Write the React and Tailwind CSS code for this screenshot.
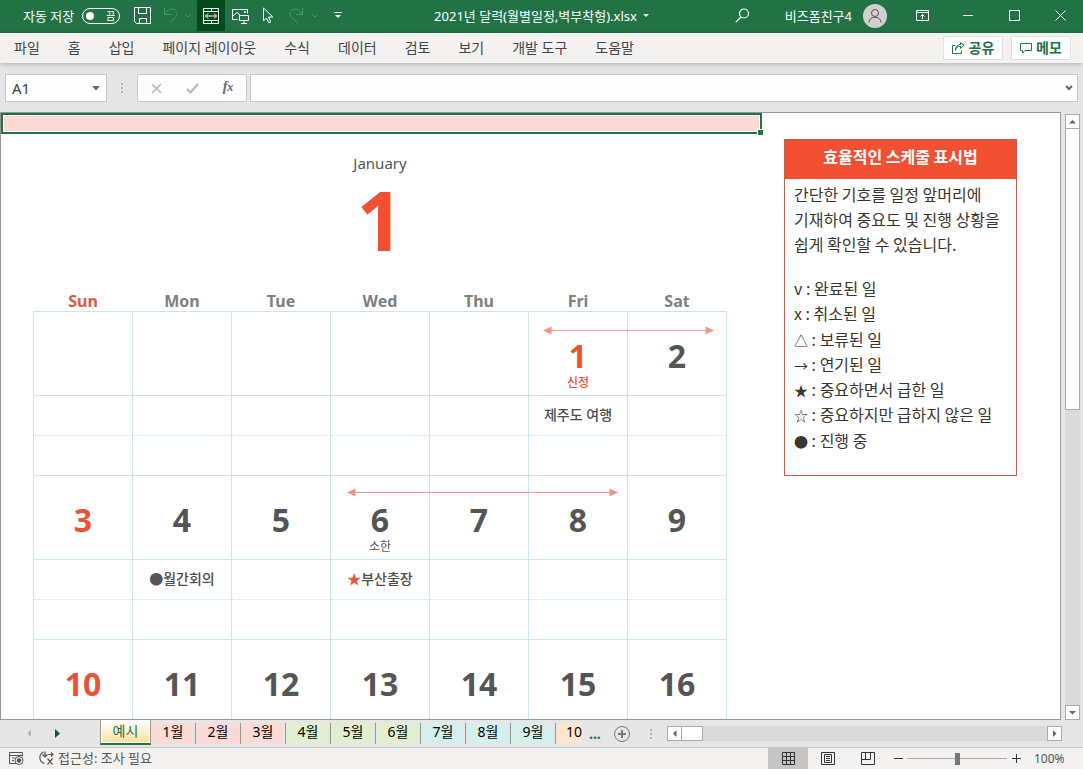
import React, { useState } from 'react';
import clsx from 'clsx';

const MENU_ITEMS = ['파일', '홈', '삽입', '페이지 레이아웃', '수식', '데이터', '검토', '보기', '개발 도구', '도움말'];

const WEEKDAYS = ['Sun', 'Mon', 'Tue', 'Wed', 'Thu', 'Fri', 'Sat'];

const WEEKS = [
  {
    days: [null, null, null, null, null, { date: 1, label: '신정', holiday: true, span: 'two' }, { date: 2 }],
    notes: { 5: { text: '제주도 여행' } },
  },
  {
    days: [{ date: 3 }, { date: 4 }, { date: 5 }, { date: 6, label: '소한', span: 'three' }, { date: 7 }, { date: 8 }, { date: 9 }],
    notes: { 1: { mark: '●', text: '월간회의' }, 3: { mark: '★', text: '부산출장', urgent: true } },
  },
  {
    days: [{ date: 10 }, { date: 11 }, { date: 12 }, { date: 13 }, { date: 14 }, { date: 15 }, { date: 16 }],
    notes: {},
  },
];

const LEGEND = [
  { mark: 'v', text: '완료된 일' },
  { mark: 'x', text: '취소된 일' },
  { mark: '△', text: '보류된 일', symbol: true },
  { mark: '→', text: '연기된 일', symbol: true },
  { mark: '★', text: '중요하면서 급한 일', symbol: true },
  { mark: '☆', text: '중요하지만 급하지 않은 일', symbol: true },
  { mark: '●', text: '진행 중', symbol: true },
];

const SHEETS = [
  { name: '1월', color: 'bg-[#fcdad5]' },
  { name: '2월', color: 'bg-[#fcdad5]' },
  { name: '3월', color: 'bg-[#fcdad5]' },
  { name: '4월', color: 'bg-[#e2efcf]' },
  { name: '5월', color: 'bg-[#e2efcf]' },
  { name: '6월', color: 'bg-[#e2efcf]' },
  { name: '7월', color: 'bg-[#d5efec]' },
  { name: '8월', color: 'bg-[#d5efec]' },
  { name: '9월', color: 'bg-[#d5efec]' },
];

const Icon = ({ w = 16, h = 16, className, children }) => (
  <svg width={w} height={h} viewBox={`0 0 ${w} ${h}`} fill="none" stroke="currentColor" className={clsx('shrink-0', className)} aria-hidden="true">
    {children}
  </svg>
);

const IconButton = ({ label, className, children }) => (
  <button type="button" aria-label={label} className={clsx('flex shrink-0 items-center justify-center', className)}>
    {children}
  </button>
);

const TinyChevron = () => (
  <Icon w={8} h={5}>
    <path d="M1 1l3 3 3-3" />
  </Icon>
);

const TitleBar = () => (
  <header className="grid h-[33px] shrink-0 grid-cols-[1fr_auto_1fr] bg-[#217346] pb-0.5 text-[13px] leading-5 text-white">
    <div className="flex items-center pl-[23px]">
      <span className="whitespace-nowrap">자동 저장</span>
      <button type="button" role="switch" aria-checked="false" aria-label="자동 저장" className="ml-2 flex h-4 w-[38px] shrink-0 items-center justify-between rounded-full border border-white pr-1 pl-[3px]">
        <span className="size-2 rounded-full bg-white" />
        <span className="text-[10px] leading-3">끔</span>
      </button>
      <IconButton label="저장" className="ml-2 h-full w-7">
        <Icon w={17} h={17}>
          <path d="M.5.5h16v16h-14l-2-2zM4.5.5v6h8v-6M5.5 16.5v-5h7v5" />
        </Icon>
      </IconButton>
      <IconButton label="실행 취소" className="ml-[3px] h-full w-6 text-[#4f9270]">
        <Icon w={16} h={17}>
          <path d="M1.5 1v6.5H8M1.5 7.5C4 3.500 7 1.500 10 2.200c4.500 1 5 5.500 2.500 8L6.500 16" />
        </Icon>
      </IconButton>
      <IconButton label="실행 취소 목록" className="h-full w-2.5 text-[#4f9270]"><TinyChevron /></IconButton>
      <IconButton label="병합하고 가운데 맞춤" className="ml-1 h-full w-7 bg-[#004b1c]">
        <Icon w={16} h={16}>
          <path d="M.5.5h15v15H.5zM.5 3.500h15M.5 12.500h15M8.500.5v3M8.500 12.500v3M2.500 8h11M5 5.500L2.500 8 5 10.500M11 5.500L13.500 8 11 10.500" />
        </Icon>
      </IconButton>
      <IconButton label="그림" className="ml-px h-full w-7">
        <Icon w={17} h={16}>
          <path d="M5.500 11.500h-5v-10h15v4M1 8l4-3.500L8 7M12.500 3.500h1v1h-1zM7.500 7.500h9v5h-9zM12 12.500v2.500M9 15.500h6" />
        </Icon>
      </IconButton>
      <IconButton label="개체 선택" className="h-full w-7">
        <Icon w={12} h={17}>
          <path d="M1.500 1v13l3-3 2.200 4.800 2-1L6.600 10h4.200z" />
        </Icon>
      </IconButton>
      <IconButton label="다시 실행" className="h-full w-7 text-[#4f9270]">
        <Icon w={16} h={17}>
          <path d="M14.500 1v6.500H8M14.500 7.500C12 3.500 9 1.500 6 2.200c-4.500 1-5 5.500-2.500 8L9.500 16" />
        </Icon>
      </IconButton>
      <IconButton label="다시 실행 목록" className="h-full w-2.5 text-[#4f9270]"><TinyChevron /></IconButton>
      <IconButton label="빠른 실행 도구 모음 사용자 지정" className="ml-3 h-full w-3">
        <Icon w={8} h={7}>
          <path d="M0 .5h8" />
          <path d="M1 3h6L4 6z" fill="currentColor" stroke="none" />
        </Icon>
      </IconButton>
    </div>

    <button type="button" className="flex items-center gap-1.5 whitespace-nowrap">
      2021년 달력(월별일정,벽부착형).xlsx
      <Icon w={6} h={4}><path d="M0 0h6L3 3z" fill="currentColor" stroke="none" /></Icon>
    </button>

    <div className="flex items-center justify-end">
      <IconButton label="검색" className="h-full w-6">
        <Icon w={15} h={15}>
          <circle cx="9" cy="5.500" r="4.500" strokeWidth="1.200" />
          <path d="M6 9L.800 14.200" strokeWidth="1.200" />
        </Icon>
      </IconButton>
      <span className="ml-[30px] whitespace-nowrap">비즈폼친구4</span>
      <IconButton label="계정" className="mr-3 ml-[11px] size-6 rounded-full bg-[#d3d1d0] text-[#555]">
        <Icon>
          <circle cx="8" cy="5" r="3.500" />
          <path d="M2 14.500c0-7 12-7 12 0" />
        </Icon>
      </IconButton>
      <IconButton label="리본 메뉴 표시 옵션" className="h-full w-[46px]">
        <Icon w={13} h={11}>
          <path d="M.5.5h12v10H.5zM.5 2.500h12M6.500 9V4.500M4.500 6.500l2-2 2 2" />
        </Icon>
      </IconButton>
      <IconButton label="최소화" className="h-full w-[46px]">
        <Icon w={10} h={1}><path d="M0 .5h10" /></Icon>
      </IconButton>
      <IconButton label="최대화" className="h-full w-[46px]">
        <Icon w={11} h={11}><path d="M.5.5h10v10h-10z" /></Icon>
      </IconButton>
      <IconButton label="닫기" className="h-full w-[46px]">
        <Icon w={11} h={11}><path d="M.5.5l10 10M10.500.5l-10 10" /></Icon>
      </IconButton>
    </div>
  </header>
);

const MenuBar = () => (
  <nav className="z-10 flex h-[30px] shrink-0 items-center justify-between bg-[#f3f2f1] pr-3 text-sm text-[#444] shadow-[0_1px_5px_rgba(0,0,0,0.25)]">
    <div className="flex">
      {MENU_ITEMS.map((item) => (
        <button key={item} type="button" className="px-3.5 leading-5 whitespace-nowrap">{item}</button>
      ))}
    </div>
    <div className="flex gap-2 leading-5 font-bold text-[#217346]">
      <button type="button" className="flex h-6 w-[60px] items-center justify-center gap-1 rounded-xs border border-[#e1dfdd] bg-white">
        <Icon w={13} h={12}>
          <path d="M3.500 3.500h-3v8h9v-3M3.500 8.500c.3-3 2-4.300 5-4.300V6.500l3.500-3.300L8.500.6v1.900C5.500 2.500 3.500 4.500 3.500 8.500z" />
        </Icon>
        공유
      </button>
      <button type="button" className="flex h-6 w-[60px] items-center justify-center gap-1 rounded-xs border border-[#e1dfdd] bg-white">
        <Icon w={12} h={11}>
          <path d="M.5.5h11v7H5l-2.500 2.500V7.500h-2z" />
        </Icon>
        메모
      </button>
    </div>
  </nav>
);

const GripDots = () => (
  <div className="flex flex-col gap-0.5">
    <i className="size-0.5 bg-[#b3b3b3]" />
    <i className="size-0.5 bg-[#b3b3b3]" />
    <i className="size-0.5 bg-[#b3b3b3]" />
  </div>
);

const FormulaBar = () => {
  const [cell, setCell] = useState('A1');
  const [formula, setFormula] = useState('');

  return (
    <div className="flex h-[49px] shrink-0 items-center px-[5px] pt-px">
      <div className="flex h-7 w-[102px] items-center border border-[#c6c6c6] bg-[#fdfdfd]">
        <input
          aria-label="이름 상자"
          value={cell}
          onChange={(e) => setCell(e.target.value)}
          className="w-0 flex-1 pl-1.5 text-[15px] leading-5 text-[#444] outline-none"
        />
        <IconButton label="이름 목록" className="h-full w-5 text-[#666]">
          <Icon w={8} h={5}><path d="M0 0h8L4 4.500z" fill="currentColor" stroke="none" /></Icon>
        </IconButton>
      </div>
      <div className="flex w-[30px] justify-center"><GripDots /></div>
      <div className="flex h-7 w-[110px] items-center border border-[#c6c6c6] bg-[#fdfdfd]">
        <IconButton label="취소" className="h-full w-9 text-[#b8b8b8]">
          <Icon w={11} h={11}><path d="M1 1l9 9M10 1l-9 9" strokeWidth="1.600" /></Icon>
        </IconButton>
        <IconButton label="입력" className="h-full w-9 text-[#b8b8b8]">
          <Icon w={13} h={11}><path d="M1 6l3.500 3.500L12 1" strokeWidth="2" /></Icon>
        </IconButton>
        <IconButton label="함수 삽입" className="h-full w-9 pb-0.5 text-sm leading-5 font-bold text-[#666] italic">
          <span className="font-['Liberation_Serif',serif]">f<span className="text-xs">x</span></span>
        </IconButton>
      </div>
      <div className="ml-[3px] flex h-7 flex-1 items-center border border-[#c6c6c6] bg-[#fdfdfd]">
        <input
          aria-label="수식 입력줄"
          value={formula}
          onChange={(e) => setFormula(e.target.value)}
          className="h-full flex-1 px-2 text-sm text-[#444] outline-none"
        />
        <IconButton label="수식 입력줄 확장" className="h-full w-4 text-[#666]">
          <Icon w={8} h={6}><path d="M1 1l3 3 3-3" strokeWidth="2" /></Icon>
        </IconButton>
      </div>
    </div>
  );
};

// Period marker drawn across neighbouring day cells
const SpanArrow = ({ length }) => (
  <svg width={length} height="9" viewBox={`0 0 ${length} 9`} className="block" aria-hidden="true">
    <path d={`M6 4.500h${length - 12}`} stroke="#ea9b8e" />
    <path d={`M0 4.500l8.500-4v8zM${length} 4.500l-8.500-4v8z`} fill="#f09484" />
  </svg>
);

const DayCell = ({ day, sunday }) => (
  <td className="relative h-[84px] border border-[#cde3ef] p-0 align-top">
    {day && (
      <div className={clsx('flex flex-col items-center pt-7', sunday || day.holiday ? 'text-[#ea5338]' : 'text-[#555]')}>
        <span className="text-[32px] leading-8 font-bold">{day.date}</span>
        {day.label && <span className={clsx('text-xs leading-[22px]', day.holiday && 'font-medium')}>{day.label}</span>}
      </div>
    )}
    {day?.span === 'two' && <div className="absolute top-3.5 left-3.5 z-10"><SpanArrow length={171} /></div>}
    {day?.span === 'three' && <div className="absolute top-3 left-4 z-10"><SpanArrow length={271} /></div>}
  </td>
);

const Week = ({ week }) => (
  <>
    <tr>
      {week.days.map((day, i) => <DayCell key={i} day={day} sunday={i === 0} />)}
    </tr>
    <tr>
      {week.days.map((_, i) => {
        const note = week.notes[i];
        return (
          <td key={i} className="h-10 border border-[#cde3ef] p-0 text-center text-sm leading-5 font-medium whitespace-nowrap text-[#4d4d4d] [border-bottom-style:dotted]">
            {note?.mark && <span className={note.urgent ? 'text-[#ea5338]' : 'text-[#555]'}>{note.mark}</span>}
            {note?.text}
          </td>
        );
      })}
    </tr>
    <tr>
      {week.days.map((_, i) => <td key={i} className="h-10 border border-t-0 border-[#cde3ef] p-0" />)}
    </tr>
  </>
);

const Calendar = () => (
  <section className="w-[694px] shrink-0 pt-[17px] text-center">
    <p className="text-[15px] leading-6 text-[#555]">January</p>
    <h1 className="text-[82px] leading-[88px] font-bold text-[#f15033]">1</h1>
    <table className="w-full table-fixed border-collapse">
      <thead>
        <tr>
          {WEEKDAYS.map((name, i) => (
            <th key={name} className={clsx('h-12 p-0 align-bottom text-base leading-5 font-bold', i === 0 ? 'text-[#dc5a44]' : 'text-[#808080]')}>
              {name}
            </th>
          ))}
        </tr>
      </thead>
      <tbody>
        {WEEKS.map((week, i) => <Week key={i} week={week} />)}
      </tbody>
    </table>
  </section>
);

const Guide = () => (
  <aside className="mt-[5px] h-[337px] w-[233px] shrink-0 border border-[#c4604d] font-['Noto_Sans_CJK_KR',sans-serif] text-base leading-[25px] text-[#3a352e]">
    <h2 className="h-[39px] bg-[#f15033] pt-1 text-center font-bold text-white">효율적인 스케줄 표시법</h2>
    <p className="pt-[3px] pl-[9px] whitespace-nowrap">
      간단한 기호를 일정 앞머리에<br />
      기재하여 중요도 및 진행 상황을<br />
      쉽게 확인할 수 있습니다.
    </p>
    <ul className="mt-[19px] grid h-[177px] auto-rows-fr pl-[9px] whitespace-nowrap">
      {LEGEND.map((item) => (
        <li key={item.mark}>
          <span className={clsx(item.symbol && 'text-sm')}>{item.mark}</span> : {item.text}
        </li>
      ))}
    </ul>
  </aside>
);

const ScrollButton = ({ label, path }) => (
  <IconButton label={label} className="size-[15px] border border-[#ababab] bg-white text-[#666]">
    <Icon w={7} h={7}><path d={path} fill="currentColor" stroke="none" /></Icon>
  </IconButton>
);

const Sheet = () => (
  <div className="flex min-h-0 flex-1">
    <main className="min-w-0 flex-1 overflow-hidden border border-[#969696] bg-white">
      <div className="relative h-[21px] w-[761px] border-2 border-[#217346] bg-[#fcdad5] inset-ring inset-ring-white">
        <span className="absolute -right-1 -bottom-1 size-[7px] border border-white bg-[#217346]" />
      </div>
      <div className="flex gap-[57px] pl-8">
        <Calendar />
        <Guide />
      </div>
    </main>
    <div className="flex w-[22px] shrink-0 flex-col items-center pt-0.5">
      <ScrollButton label="위로 스크롤" path="M0 5.500h7L3.500 2z" />
      <div className="w-[15px] flex-1 bg-[#dadada]">
        <div className="h-[281px] border border-t-0 border-[#ababab] bg-white" />
      </div>
      <ScrollButton label="아래로 스크롤" path="M0 2h7L3.500 5.500z" />
    </div>
  </div>
);

const SheetTabs = () => (
  <div className="flex h-7 shrink-0 items-center border-b border-[#c6c6c6] pr-[21px] text-sm leading-5 text-black">
    <div className="flex w-[100px] shrink-0 gap-4 pl-[23px]">
      <IconButton label="이전 시트" className="size-3 text-[#b5b5b5]">
        <Icon w={4} h={7}><path d="M4 0v7L0 3.500z" fill="currentColor" stroke="none" /></Icon>
      </IconButton>
      <IconButton label="다음 시트" className="size-3 text-[#0e5c2f]">
        <Icon w={5} h={9}><path d="M0 0v9l5-4.500z" fill="currentColor" stroke="none" /></Icon>
      </IconButton>
    </div>
    <div className="-mt-px flex h-full shrink-0">
      <button type="button" className="z-10 h-[25px] w-[51px] border-x border-b-2 border-x-[#969696] border-b-[#217346] bg-white p-px text-[#217346]">
        <span className="block h-full bg-linear-to-b from-white to-[#fde29b]">예시</span>
      </button>
      {SHEETS.map((sheet) => (
        <div key={sheet.name} className="mt-[3px] flex h-[21px] w-[45px] items-stretch border-r border-[#969696] px-px">
          <button type="button" className={clsx('w-full pb-[3px] leading-[18px]', sheet.color)}>{sheet.name}</button>
        </div>
      ))}
      <button type="button" aria-label="10월" className="mt-[3px] ml-0.5 h-[21px] w-6 overflow-hidden bg-[#fde6cb] pb-[3px] text-right leading-[18px] whitespace-nowrap">10</button>
    </div>
    <button type="button" className="ml-[7px] shrink-0 font-bold text-[#217346]">...</button>
    <IconButton label="새 시트" className="ml-[13px] size-4 text-[#777]">
      <Icon>
        <circle cx="8" cy="8" r="7.500" />
        <path d="M8 4v8M4 8h8" strokeWidth="2" />
      </Icon>
    </IconButton>
    <div className="ml-5 shrink-0"><GripDots /></div>
    <div className="ml-[15px] flex flex-1 bg-[#dadada]">
      <ScrollButton label="왼쪽으로 스크롤" path="M5.500 0v7L2 3.500z" />
      <div className="w-[21px] border border-l-0 border-[#ababab] bg-white" />
      <div className="flex-1" />
      <ScrollButton label="오른쪽으로 스크롤" path="M2 0v7l3.500-3.500z" />
    </div>
  </div>
);

const StatusBar = () => {
  const [zoom, setZoom] = useState(100);

  return (
    <footer className="flex h-[21px] shrink-0 items-center bg-[#f3f2f1] pl-2 text-[13px] leading-5 text-[#555]">
      <IconButton label="매크로 기록" className="h-full w-4">
        <Icon w={15} h={13}>
          <path d="M7 11.500H.5v-11h13v4M.5 3.500h13M3 6h3M3 8.500h2" />
          <circle cx="10" cy="8.500" r="4" />
          <circle cx="10" cy="8.500" r="1.800" fill="currentColor" />
        </Icon>
      </IconButton>
      <button type="button" className="ml-[15px] flex items-center gap-1 pb-0.5 whitespace-nowrap">
        <Icon w={15} h={14}>
          <path d="M4.500 1C-.5 3.500-.5 10.500 5.500 12.500M6 .5v5M3.500 3.500L6 6l2.500-2.500M9 3.500h5M12 1.500l2 2-2 2M8.500 7.500l5 6M13.500 7.500l-5 6" strokeWidth="1.200" />
        </Icon>
        접근성: 조사 필요
      </button>
      <div className="ml-auto flex h-full items-center text-[#333]">
        <IconButton label="기본" className="h-full w-10 bg-[#c6c5c4]">
          <Icon w={13} h={13}><path d="M.5.5h12v12H.5zM4.500.5v12M8.500.5v12M.5 4.500h12M.5 8.500h12" /></Icon>
        </IconButton>
        <IconButton label="페이지 레이아웃 보기" className="h-full w-10">
          <Icon w={14} h={13}><path d="M.5.5h13v12H.5zM3.500 2.500h7v8h-7zM5 4.500h4M5 6.500h4M5 8.500h4" /></Icon>
        </IconButton>
        <IconButton label="페이지 나누기 미리 보기" className="h-full w-10">
          <Icon w={14} h={13}><path d="M.5.5h13v12H.5zM4.500.5v7M9.500.5v7h-9" /></Icon>
        </IconButton>
        <IconButton label="축소" className="ml-1 h-full w-3">
          <Icon w={9} h={9}><path d="M0 4.500h9" /></Icon>
        </IconButton>
        <input
          type="range"
          aria-label="확대/축소"
          min="10"
          max="190"
          value={zoom}
          onChange={(e) => setZoom(Number(e.target.value))}
          className="mx-[3px] h-px w-[100px] appearance-none bg-[#aaa] [&::-webkit-slider-thumb]:h-3 [&::-webkit-slider-thumb]:w-[5px] [&::-webkit-slider-thumb]:appearance-none [&::-webkit-slider-thumb]:bg-[#777]"
        />
        <IconButton label="확대" className="h-full w-3">
          <Icon w={9} h={9}><path d="M0 4.500h9M4.500 0v9" /></Icon>
        </IconButton>
        <span className="w-[61px] pl-3 text-xs leading-5 text-[#555]">{zoom}%</span>
      </div>
    </footer>
  );
};

const App = () => (
  <div className="flex h-screen flex-col overflow-hidden bg-[#e6e6e6] font-['Noto_Sans','Noto_Sans_CJK_KR',sans-serif]">
    <TitleBar />
    <MenuBar />
    <FormulaBar />
    <Sheet />
    <SheetTabs />
    <StatusBar />
  </div>
);

export default App;
